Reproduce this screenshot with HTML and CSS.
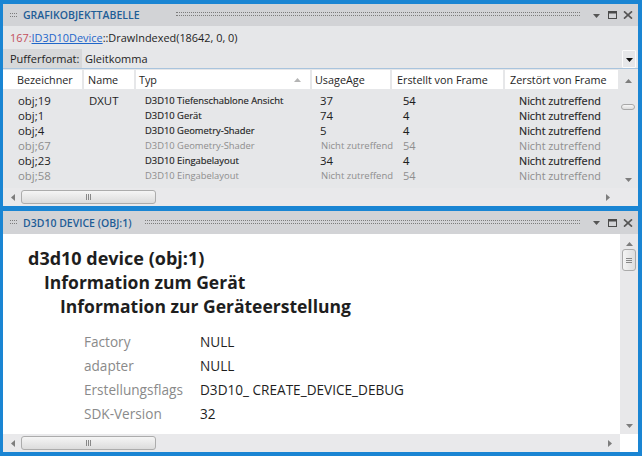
FILE: index.html
```html
<!DOCTYPE html>
<html lang="de">
<head>
<meta charset="utf-8">
<title>Grafikobjekttabelle</title>
<link rel="stylesheet" href="styles.css">
</head>
<body>
<div class="frame">
  <section class="panel panel-top">
    <header class="titlebar">
      <span class="grip"></span>
      <span class="title">GRAFIKOBJEKTTABELLE</span>
      <span class="dots dots-far"></span>
      <span class="tb-icons">
        <svg class="ic-drop" width="7" height="4" viewBox="0 0 7 4"><polygon points="0,0 7,0 3.5,4"/></svg>
        <svg class="ic-max" width="9" height="8" viewBox="0 0 9 8"><rect x="0.5" y="0.5" width="8" height="7" fill="none" stroke="#4a4a4a"/><rect x="0" y="0" width="9" height="2.5" fill="#4a4a4a"/></svg>
        <svg class="ic-close" width="10" height="8" viewBox="0 0 10 8"><path d="M1 0.3 L9 7.7 M9 0.3 L1 7.7" stroke="#555" stroke-width="1.6" fill="none"/></svg>
      </span>
    </header>
    <div class="callline"><span class="num">167:</span><span class="link">ID3D10Device</span>::DrawIndexed(18642, 0, 0)</div>
    <div class="format-row">
      <span class="format-label">Pufferformat:</span>
      <span class="format-value">Gleitkomma</span>
      <span class="format-btn"><svg width="7" height="4" viewBox="0 0 7 4"><polygon points="0,0 7,0 3.5,4" fill="#111"/></svg></span>
    </div>
    <div class="table-area">
      <div class="table">
        <div class="thead grid">
          <div class="th c1">Bezeichner</div>
          <div class="th c2">Name</div>
          <div class="th c3">Typ<svg class="sort" width="7" height="4" viewBox="0 0 7 4"><polygon points="0,4 7,4 3.5,0"/></svg></div>
          <div class="th c4">UsageAge</div>
          <div class="th c5">Erstellt von Frame</div>
          <div class="th c6">Zerstört von Frame</div>
        </div>
        <div class="tbody">
          <div class="row grid"><div class="c1">obj;19</div><div class="c2">DXUT</div><div class="c3">D3D10 Tiefenschablone Ansicht</div><div class="c4">37</div><div class="c5">54</div><div class="c6">Nicht zutreffend</div></div>
          <div class="row grid"><div class="c1">obj;1</div><div class="c2"></div><div class="c3">D3D10 Gerät</div><div class="c4">74</div><div class="c5">4</div><div class="c6">Nicht zutreffend</div></div>
          <div class="row grid"><div class="c1">obj;4</div><div class="c2"></div><div class="c3">D3D10 Geometry-Shader</div><div class="c4">5</div><div class="c5">4</div><div class="c6">Nicht zutreffend</div></div>
          <div class="row grid dim"><div class="c1">obj;67</div><div class="c2"></div><div class="c3">D3D10 Geometry-Shader</div><div class="c4">Nicht zutreffend</div><div class="c5">54</div><div class="c6">Nicht zutreffend</div></div>
          <div class="row grid"><div class="c1">obj;23</div><div class="c2"></div><div class="c3">D3D10 Eingabelayout</div><div class="c4">34</div><div class="c5">4</div><div class="c6">Nicht zutreffend</div></div>
          <div class="row grid dim"><div class="c1">obj;58</div><div class="c2"></div><div class="c3">D3D10 Eingabelayout</div><div class="c4">Nicht zutreffend</div><div class="c5">54</div><div class="c6">Nicht zutreffend</div></div>
        </div>
      </div>
      <div class="vscroll vscroll-top">
        <svg class="arr" width="7" height="4" viewBox="0 0 7 4"><polygon points="0,4 7,4 3.5,0"/></svg>
        <span class="pill"></span>
        <span class="spacer"></span>
        <svg class="arr" width="7" height="4" viewBox="0 0 7 4"><polygon points="0,0 7,0 3.5,4"/></svg>
      </div>
    </div>
    <div class="hscroll">
      <svg class="arr" width="4" height="7" viewBox="0 0 4 7"><polygon points="4,0 4,7 0,3.5"/></svg>
      <span class="hthumb"><span class="hgrip"></span></span>
      <span class="spacer"></span>
      <svg class="arr" width="4" height="7" viewBox="0 0 4 7"><polygon points="0,0 0,7 4,3.5"/></svg>
      <span class="corner"></span>
    </div>
  </section>

  <section class="panel panel-bottom">
    <header class="titlebar">
      <span class="grip"></span>
      <span class="title">D3D10 DEVICE (OBJ:1)</span>
      <span class="dots"></span>
      <span class="tb-icons">
        <svg class="ic-drop" width="7" height="4" viewBox="0 0 7 4"><polygon points="0,0 7,0 3.5,4"/></svg>
        <svg class="ic-max" width="9" height="8" viewBox="0 0 9 8"><rect x="0.5" y="0.5" width="8" height="7" fill="none" stroke="#4a4a4a"/><rect x="0" y="0" width="9" height="2.5" fill="#4a4a4a"/></svg>
        <svg class="ic-close" width="10" height="8" viewBox="0 0 10 8"><path d="M1 0.3 L9 7.7 M9 0.3 L1 7.7" stroke="#555" stroke-width="1.6" fill="none"/></svg>
      </span>
    </header>
    <div class="detail-area">
      <div class="detail">
        <h1 class="h-1">d3d10 device (obj:1)</h1>
        <h2 class="h-2">Information zum Gerät</h2>
        <h3 class="h-3">Information zur Geräteerstellung</h3>
        <dl class="props">
          <dt>Factory</dt><dd>NULL</dd>
          <dt>adapter</dt><dd>NULL</dd>
          <dt>Erstellungsflags</dt><dd>D3D10_ CREATE_DEVICE_DEBUG</dd>
          <dt>SDK-Version</dt><dd>32</dd>
        </dl>
      </div>
      <div class="vscroll vscroll-bottom">
        <svg class="arr" width="7" height="4" viewBox="0 0 7 4"><polygon points="0,4 7,4 3.5,0"/></svg>
        <span class="vthumb"><span class="vgrip"></span></span>
        <span class="spacer"></span>
        <svg class="arr" width="7" height="4" viewBox="0 0 7 4"><polygon points="0,0 7,0 3.5,4"/></svg>
      </div>
    </div>
    <div class="hscroll hscroll-bottom">
      <svg class="arr" width="4" height="7" viewBox="0 0 4 7"><polygon points="4,0 4,7 0,3.5"/></svg>
      <span class="hthumb"><span class="hgrip"></span></span>
      <span class="spacer"></span>
      <svg class="arr" width="4" height="7" viewBox="0 0 4 7"><polygon points="0,0 0,7 4,3.5"/></svg>
      <span class="corner corner-white"></span>
    </div>
  </section>
</div>
</body>
</html>
```

FILE: styles.css
```css
* { box-sizing: border-box; margin: 0; padding: 0; }
html, body { width: 642px; height: 456px; overflow: hidden; }
body {
  background: #1a85d3;
  font-family: "Open Sans", "Noto Sans", sans-serif;
  color: #1e1e1e;
}
.frame {
  display: flex;
  flex-direction: column;
  gap: 5px;
  padding: 4px 4px 4px 3px;
  height: 456px;
}
.panel { display: flex; flex-direction: column; background: #e6e7e9; }
.panel-top { height: 202px; }
.panel-bottom { height: 241px; }

/* title bars */
.titlebar {
  display: flex;
  align-items: center;
  height: 22px;
  flex: none;
  background: #d2d3d6;
  padding: 0 5px 0 7px;
}
.panel-bottom .titlebar { height: 23px; }
.grip {
  width: 7px;
  height: 4px;
  border-top: 1px dotted #7c7c7c;
  border-bottom: 1px dotted #7c7c7c;
  margin-right: 6px;
  margin-top: -1px;
}
.title {
  font-size: 10.5px;
  font-weight: 600;
  color: #1e5d96;
  white-space: nowrap;
}
.dots {
  flex: 1;
  height: 4px;
  border-top: 1px dotted #7c7c7c;
  border-bottom: 1px dotted #7c7c7c;
  margin: -2px 13px 0 13px;
}
.dots-far { margin-left: 36px; }
.tb-icons { display: flex; align-items: center; }
.ic-drop { fill: #555; margin-right: 8px; margin-top: 1px; }
.ic-max { margin-right: 6px; }

/* call line */
.callline {
  height: 23px;
  line-height: 23px;
  padding-left: 7px;
  font-size: 10.9px;
  color: #1e1e1e;
  flex: none;
}
.num { color: #c4505c; }
.link { color: #1f66c9; text-decoration: underline; }

/* format row */
.format-row {
  display: flex;
  align-items: center;
  height: 20px;
  flex: none;
  font-size: 11px;
  border-bottom: 1px solid #a9c4dd;
}
.format-label {
  width: 79px;
  height: 19px;
  line-height: 19px;
  background: #d7d8da;
  padding-left: 7px;
}
.format-value { padding-left: 3px; }
.format-btn {
  margin-left: auto;
  margin-right: 2px;
  width: 14px;
  height: 18px;
  border: 1px solid #fafafa;
  border-radius: 1px;
  display: flex;
  align-items: center;
  justify-content: center;
  padding-top: 2px;
}

/* table */
.table-area { display: flex; flex: 1; min-height: 0; }
.table { flex: 1; padding-top: 1px; }
.grid {
  display: grid;
  grid-template-columns: 79px 50px 174px 78px 111px 113px;
  column-gap: 2px;
}
.thead { height: 19px; }
.th {
  background: #fff;
  font-size: 10.8px;
  line-height: 19px;
  white-space: nowrap;
  position: relative;
}
.th.c1 { padding-left: 14px; }
.th.c2 { padding-left: 4px; }
.th.c3 { padding-left: 3px; }
.th.c4 { padding-left: 3px; }
.th.c5 { padding-left: 5px; }
.th.c6 { padding-left: 5px; }
.sort { position: absolute; right: 9px; top: 8px; fill: #b4b4b4; }
.tbody { padding-top: 4px; }
.row { height: 15px; line-height: 15px; font-size: 11.4px; white-space: nowrap; }
.row .c1 { padding-left: 15px; }
.row .c2 { padding-left: 5px; }
.row .c3 { padding-left: 9px; font-size: 9.4px; -webkit-text-stroke: 0.15px currentColor; }
.row .c4 { padding-left: 8px; }
.row .c5 { padding-left: 11px; font-size: 11px; -webkit-text-stroke: 0.15px currentColor; }
.row .c6 { padding-left: 14px; font-size: 10.8px; -webkit-text-stroke: 0.15px currentColor; }
.row.dim { color: #8e8e8e; }
.row.dim .c3, .row.dim .c5, .row.dim .c6 { -webkit-text-stroke: 0; }
.row.dim .c4 { font-size: 9.5px; padding-left: 9px; }

/* scrollbars */
.vscroll {
  display: flex;
  flex-direction: column;
  align-items: center;
  flex: none;
}
.vscroll-top { width: 20px; padding: 10px 0 6px; }
.vscroll-bottom { width: 18px; background: #e8e8ea; padding: 8px 0 6px; }
.arr { fill: #7d7d7d; flex: none; }
.spacer { flex: 1; }
.pill {
  margin-top: 21px;
  width: 14px;
  height: 6px;
  border: 1px solid #a8a8a8;
  border-radius: 3px;
  background: linear-gradient(#f6f6f6, #dcdcdc);
}
.vthumb {
  margin-top: 3px;
  width: 14px;
  height: 22px;
  border: 1px solid #aaaaaa;
  border-radius: 3px;
  background: linear-gradient(90deg, #f4f4f4, #dedede);
  display: flex;
  align-items: center;
  justify-content: center;
}
.vgrip {
  width: 6px;
  height: 5px;
  border-top: 1px solid #888;
  border-bottom: 1px solid #888;
  position: relative;
}
.vgrip::after {
  content: "";
  position: absolute;
  left: 0; right: 0; top: 1px;
  border-top: 1px solid #888;
}
.hscroll {
  display: flex;
  align-items: center;
  height: 18px;
  flex: none;
  background: #e9e9eb;
  padding-left: 8px;
}
.hthumb {
  margin-left: 6px;
  width: 135px;
  height: 14px;
  border: 1px solid #acacac;
  border-radius: 3px;
  background: linear-gradient(#f5f5f5, #dcdcdc);
  display: flex;
  align-items: center;
  justify-content: center;
}
.hgrip {
  width: 5px;
  height: 6px;
  border-left: 1px solid #888;
  border-right: 1px solid #888;
  position: relative;
}
.hgrip::after {
  content: "";
  position: absolute;
  top: 0; bottom: 0; left: 1px;
  border-left: 1px solid #888;
}
.corner { width: 28px; height: 18px; flex: none; }
.hscroll-bottom .corner { width: 26px; }
.corner-white { background: #fff; margin-left: 8px; width: 18px !important; }

/* detail */
.detail-area { display: flex; flex: 1; min-height: 0; background: #fff; }
.detail { flex: 1; padding: 12px 0 0 25px; }
.h-1 { font-size: 18px; font-weight: 700; line-height: 24px; }
.h-2 { font-size: 17.5px; font-weight: 700; line-height: 24px; padding-left: 16px; }
.h-3 { font-size: 17.5px; font-weight: 700; line-height: 24px; padding-left: 32px; }
.props {
  display: grid;
  grid-template-columns: 116px auto;
  margin: 12px 0 0 56px;
  font-size: 13.6px;
  line-height: 24px;
}
.props dt { color: #8a8a8a; }
.props dd { color: #1e1e1e; }
```
